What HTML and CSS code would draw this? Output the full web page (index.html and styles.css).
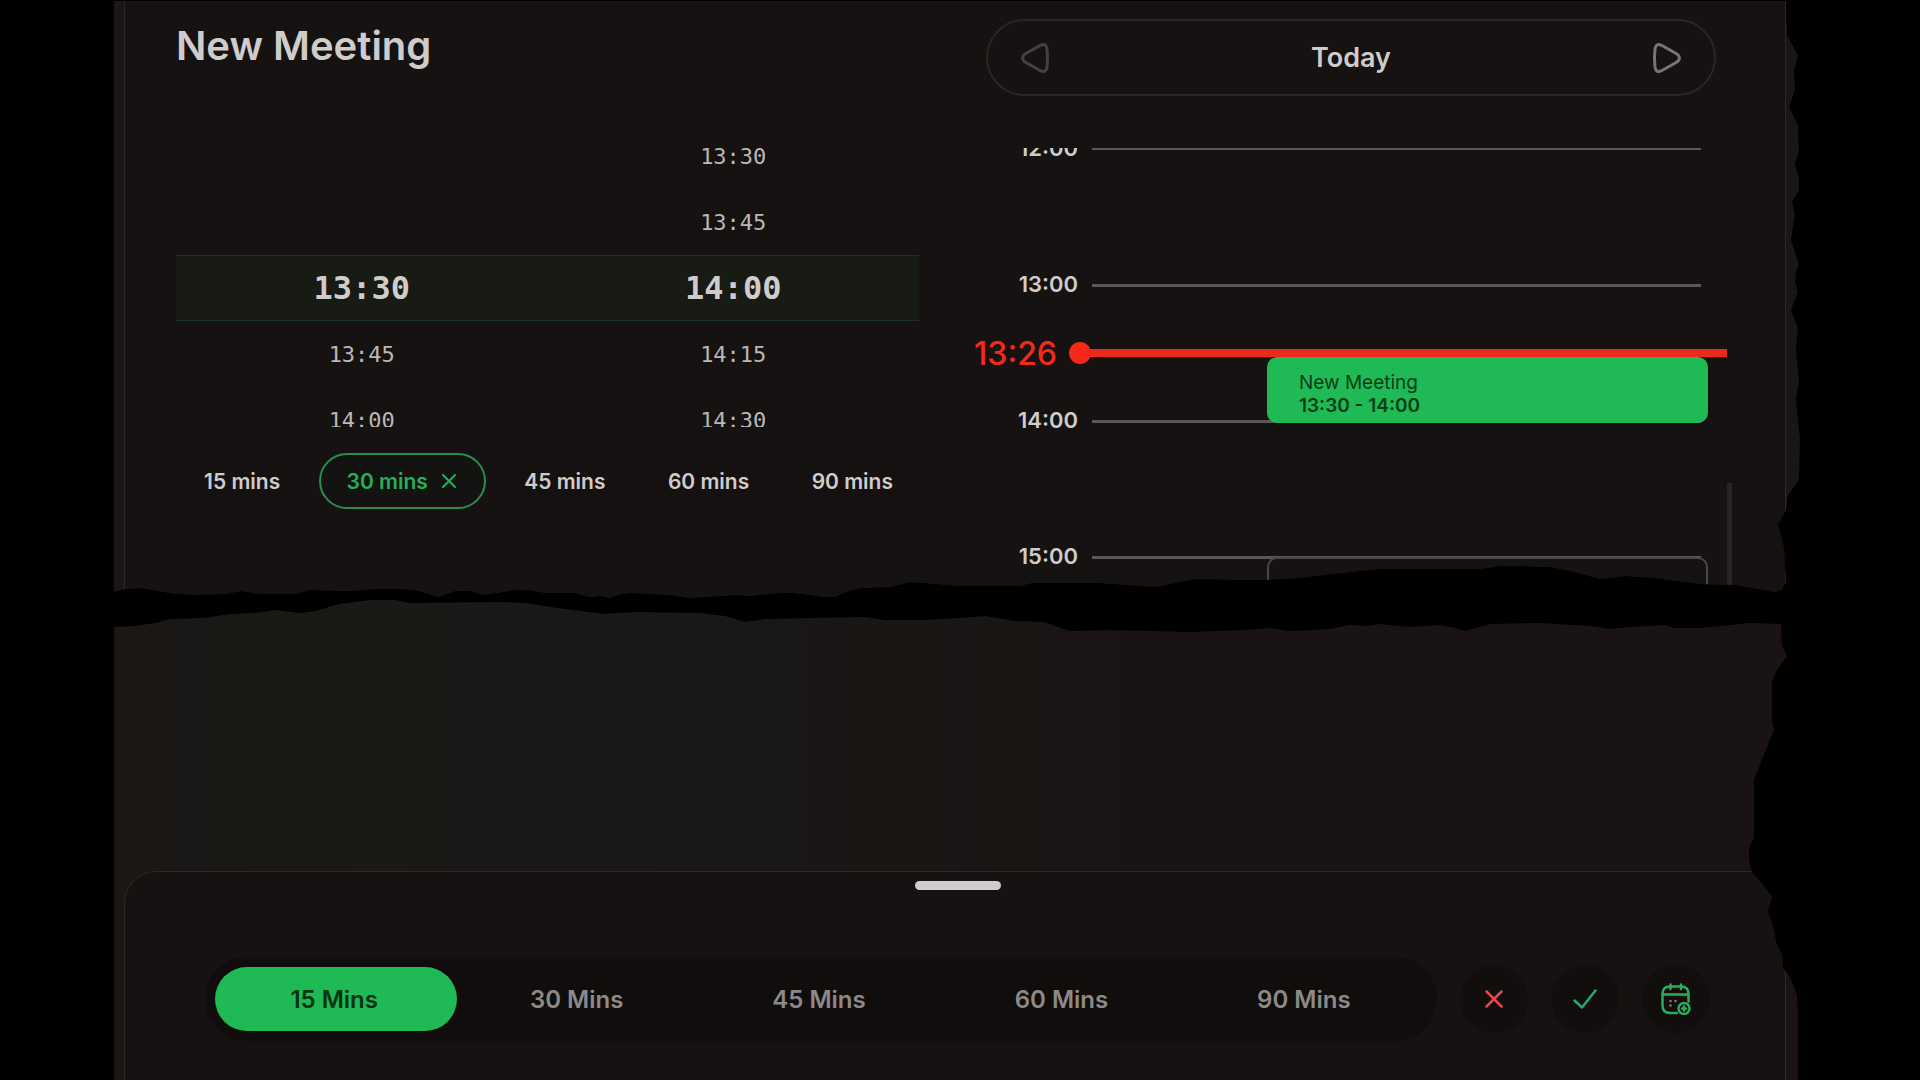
FILE: index.html
```
<!DOCTYPE html>
<html lang="en">
<head>
    <meta charset="UTF-8">
    <meta name="viewport" content="width=device-width, initial-scale=1.0">
    <title>New Meeting</title>
    <link rel="stylesheet" href="styles.css">
</head>
<body>
    <!-- Torn paper outlines used by the two sheets -->
    <svg class="defs" width="0" height="0" aria-hidden="true">
        <clipPath id="tear-top" clipPathUnits="objectBoundingBox">
            <path transform="scale(0.0005931 0.0016667) translate(-114 0)" d="M114 1 L1786 1 L1787 35 L1798 55 L1794 70 L1795 90 L1789 107 L1798 125 L1799 150 L1795 165 L1799 178 L1799 190 L1792 202 L1795 215 L1791 240 L1799 264 L1796 272 L1795 282 L1798 292 L1791 310 L1798 328 L1796 350 L1799 380 L1796 400 L1800 440 L1799 480 L1788 495 L1786 510 L1778 524 L1784 548 L1786 582 L1782 590 L1775 592 L1735 585 L1700 584 L1655 578 L1625 576 L1600 579 L1575 572 L1550 567 L1520 566 L1500 566 L1480 569 L1380 569 L1340 573 L1300 578 L1260 580 L1195 579 L1155 587 L1100 583 L1032 583 L1020 586 L960 586 L925 583 L910 582 L890 587 L860 588 L845 592 L835 597 L825 597 L795 593 L780 593 L750 596 L735 595 L690 598 L670 595 L632 593 L620 594 L610 598 L600 596 L590 597 L575 593 L545 593 L530 590 L515 590 L483 595 L470 591 L455 591 L438 597 L420 591 L405 589 L375 589 L350 591 L310 590 L295 594 L260 594 L242 591 L225 594 L190 595 L170 593 L140 588 L125 589 L114 592 Z"/>
        </clipPath>
        <clipPath id="tear-bottom" clipPathUnits="objectBoundingBox">
            <path transform="scale(0.0005931 0.0020833) translate(-114 -600)" d="M114 627 L135 626 L155 623 L170 619 L205 618 L230 614 L255 613 L275 610 L300 613 L315 611 L340 604 L370 600 L395 600 L410 603 L500 602 L525 603 L550 607 L605 614 L635 612 L700 613 L725 616 L745 622 L765 619 L865 617 L885 620 L925 620 L960 618 L985 616 L1015 621 L1045 622 L1058 627 L1070 631 L1110 630 L1190 632 L1245 630 L1260 629 L1270 628 L1290 631 L1330 629 L1350 625 L1365 626 L1380 624 L1410 627 L1440 625 L1455 628 L1465 631 L1490 624 L1540 623 L1570 625 L1590 626 L1610 629 L1630 627 L1665 625 L1675 628 L1700 628 L1750 623 L1781 624 L1782 645 L1787 656 L1777 670 L1772 682 L1772 720 L1774 730 L1765 752 L1754 780 L1754 838 L1749 848 L1749 860 L1752 872 L1757 878 L1772 896 L1768 912 L1773 925 L1776 942 L1782 955 L1783 968 L1790 977 L1797 995 L1798 1010 L1798 1080 L114 1080 Z"/>
        </clipPath>
    </svg>

    <main class="page">
        <section class="sheet sheet-top">
            <div class="planner">
                <div class="picker">
                    <h1>New Meeting</h1>

                    <div class="wheels">
                        <div class="wheel wheel-start">
                            <button type="button" class="time selected">13:30</button>
                            <button type="button" class="time">13:45</button>
                            <button type="button" class="time">14:00</button>
                        </div>
                        <div class="wheel">
                            <button type="button" class="time">13:30</button>
                            <button type="button" class="time">13:45</button>
                            <button type="button" class="time selected">14:00</button>
                            <button type="button" class="time">14:15</button>
                            <button type="button" class="time">14:30</button>
                        </div>
                    </div>

                    <div class="chips">
                        <button type="button" class="chip">15 mins</button>
                        <button type="button" class="chip active">30 mins
                            <svg width="14" height="14" viewBox="0 0 14 14" fill="none" stroke="currentColor" stroke-width="2" stroke-linecap="round"><path d="M1 1l12 12M13 1L1 13"/></svg>
                        </button>
                        <button type="button" class="chip">45 mins</button>
                        <button type="button" class="chip">60 mins</button>
                        <button type="button" class="chip">90 mins</button>
                    </div>
                </div>

                <div class="agenda">
                    <div class="day-nav">
                        <button type="button" class="nav-btn dim" aria-label="Previous day">
                            <svg width="30" height="32" viewBox="0 0 30 32" fill="none" stroke="currentColor" stroke-width="3" stroke-linejoin="round"><path d="M20.500 3.300 L5 12 Q0 16 5 20 L20.500 28.700 Q26 31.500 27 25 Q28 16 27 7 Q26 .5 20.500 3.300 Z"/></svg>
                        </button>
                        <h2>Today</h2>
                        <button type="button" class="nav-btn" aria-label="Next day">
                            <svg width="30" height="32" viewBox="0 0 30 32" fill="none" stroke="currentColor" stroke-width="3" stroke-linejoin="round"><path d="M9.500 3.300 L25 12 Q30 16 25 20 L9.500 28.700 Q4 31.500 3 25 Q2 16 3 7 Q4 .5 9.500 3.300 Z"/></svg>
                        </button>
                    </div>

                    <div class="timeline">
                        <div class="hour"><span>12:00</span></div>
                        <div class="hour"><span>13:00</span></div>
                        <div class="hour"><span>14:00</span></div>
                        <div class="hour"><span>15:00</span></div>

                        <div class="event">
                            <p>New Meeting</p>
                            <p class="event-time">13:30 - 14:00</p>
                        </div>
                        <div class="event busy"></div>
                        <div class="now"><span>13:26</span></div>
                        <div class="scroll-thumb"></div>
                    </div>
                </div>
            </div>
        </section>

        <section class="sheet sheet-bottom">
            <div class="drawer">
                <div class="handle"></div>
                <div class="drawer-row">
                    <div class="segments">
                        <button type="button" class="segment active">15 Mins</button>
                        <button type="button" class="segment">30 Mins</button>
                        <button type="button" class="segment">45 Mins</button>
                        <button type="button" class="segment">60 Mins</button>
                        <button type="button" class="segment">90 Mins</button>
                    </div>
                    <button type="button" class="round-btn cancel" aria-label="Cancel">
                        <svg width="18" height="18" viewBox="0 0 18 18" fill="none" stroke="currentColor" stroke-width="2.500" stroke-linecap="round"><path d="M1.500 1.500l15 15M16.500 1.500l-15 15"/></svg>
                    </button>
                    <button type="button" class="round-btn confirm" aria-label="Confirm">
                        <svg width="24" height="20" viewBox="0 0 24 20" fill="none" stroke="currentColor" stroke-width="2.500" stroke-linecap="round" stroke-linejoin="round"><path d="M1.500 11.500l7.500 7L22.500 1.500"/></svg>
                    </button>
                    <button type="button" class="round-btn schedule" aria-label="Add to calendar">
                        <svg width="30" height="32" viewBox="0 0 30 32" fill="none" stroke="currentColor" stroke-width="2.500" stroke-linecap="round">
                            <path d="M16 30H9Q1.500 30 1.500 22.500V11Q1.500 3.500 9 3.500H20Q27.500 3.500 27.500 11V18.500"/>
                            <path d="M9.500 1.500v4.500M20 1.500v4.500M2 11.500h25"/>
                            <circle cx="23" cy="25.500" r="5.500"/>
                            <path d="M23 23.500v4M21 25.500h4"/>
                            <path class="dots" d="M9.500 18h.01M14.500 18h.01M9.500 22.500h.01"/>
                        </svg>
                    </button>
                </div>
            </div>
        </section>
    </main>
</body>
</html>
```
FILE: styles.css
```
* {
    box-sizing: border-box;
}

body {
    margin: 0;
    background-color: #000;
    color: #cfcccb;
    font-family: Inter, "Open Sans", sans-serif;
}

h1, h2, p {
    margin: 0;
}

button {
    padding: 0;
    border: none;
    background: none;
    color: inherit;
    font-family: inherit;
    cursor: pointer;
}

.defs {
    position: absolute;
}

.page {
    display: flex;
    flex-direction: column;
    min-height: 100vh;
    padding: 0 120px 0 114px;
}

/* Sheets */
.sheet {
    padding: 0 14px 0 10px;
}

.sheet-top {
    background-color: #191615;
    clip-path: url(#tear-top);
}

.sheet-bottom {
    flex: 1;
    display: flex;
    flex-direction: column;
    padding-top: 271px;
    background: linear-gradient(90deg, #1a1715 0%, #191916 15%, #191816 35%, #191413 60%);
    clip-path: url(#tear-bottom);
}

/* Planner */
.planner {
    display: grid;
    grid-template-columns: 743fr 762fr;
    gap: 51px;
    padding: 0 53px 0 51px;
    border: 1px solid #2b2725;
    border-width: 0 1px;
    background-color: #161211;
}

.picker h1 {
    padding-top: 22px;
    font-size: 40px;
    font-weight: 600;
    line-height: 48px;
}

.wheels {
    display: grid;
    grid-template-columns: 1fr 1fr;
    height: 304px;
    margin-top: 53px;
    overflow: hidden;
}

.wheel {
    display: flex;
    flex-direction: column;
}

.wheel-start {
    padding-top: 132px;
}

.time {
    flex: none;
    height: 66px;
    font-family: "DejaVu Sans Mono", monospace;
    font-size: 22px;
    color: #bab7b6;
}

.time.selected {
    border: 1px solid #1d2f26;
    border-width: 1px 0;
    background-color: #181a14;
    font-size: 32px;
    font-weight: bold;
    color: #cfcccb;
}

.chips {
    display: flex;
    justify-content: space-between;
    margin-top: 26px;
    padding: 0 2px 0 4px;
}

.chip {
    display: flex;
    align-items: center;
    gap: 14px;
    height: 56px;
    padding: 0 24px;
    border-radius: 28px;
    background-color: #151110;
    font-size: 21px;
    font-weight: 600;
}

.chip.active {
    padding: 0 28px 0 26px;
    border: 2px solid #2a8d4d;
    background-color: #131412;
    color: #27ae58;
}

/* Agenda */
.agenda {
    padding-top: 19px;
}

.day-nav {
    display: flex;
    align-items: center;
    justify-content: space-between;
    height: 77px;
    margin: 0 16px;
    padding: 0 32px;
    border: 2px solid #292625;
    border-radius: 39px;
}

.day-nav h2 {
    font-size: 27px;
    font-weight: 600;
}

.nav-btn {
    display: flex;
    color: #777473;
}

.nav-btn.dim {
    color: #454140;
}

.timeline {
    position: relative;
    height: 452px;
    margin-top: 52px;
    overflow: hidden;
}

.hour {
    display: flex;
    gap: 14px;
    height: 136px;
    padding-right: 31px;
}

.hour span {
    width: 108px;
    margin-top: -13px;
    font-size: 22px;
    font-weight: 600;
    line-height: 26px;
    text-align: right;
}

.hour::after {
    content: "";
    flex: 1;
    height: 3px;
    background-color: #5a5756;
}

.hour:first-child::after {
    height: 2px;
}

.event {
    position: absolute;
    top: 209px;
    left: 297px;
    right: 24px;
    height: 66px;
    padding: 14px 32px;
    border-radius: 10px;
    background-color: #1fb955;
    color: #063d15;
    font-size: 19px;
    line-height: 23px;
}

.event-time {
    font-weight: 600;
}

.event.busy {
    top: 409px;
    border: 2px solid #4a4746;
    background: none;
}

.now {
    position: absolute;
    top: 185px;
    left: 0;
    right: 5px;
    display: flex;
    align-items: center;
    height: 40px;
    color: #f5291a;
}

.now span {
    width: 87px;
    font-size: 32px;
    font-weight: 500;
    text-align: right;
}

.now::before {
    content: "";
    order: 1;
    width: 22px;
    height: 22px;
    margin-left: 12px;
    border-radius: 50%;
    background-color: #f5291a;
}

.now::after {
    content: "";
    order: 2;
    flex: 1;
    height: 8px;
    margin-left: -4px;
    background-color: #ea2a1d;
}

.scroll-thumb {
    position: absolute;
    top: 335px;
    right: 0;
    bottom: 0;
    width: 5px;
    background-color: #282524;
}

/* Drawer */
.drawer {
    flex: 1;
    padding: 9px 75px 0 80px;
    border: 1px solid #2e2927;
    border-bottom: none;
    border-radius: 32px 32px 0 0;
    background-color: #161211;
}

.handle {
    width: 86px;
    height: 9px;
    margin: 0 auto;
    border-radius: 5px;
    background-color: #cfcccb;
}

.drawer-row {
    display: flex;
    align-items: center;
    gap: 23px;
    margin-top: 67px;
}

.segments {
    flex: 1;
    display: flex;
    padding: 10px;
    border-radius: 42px;
    background-color: #110d0c;
}

.segment {
    flex: 1;
    height: 64px;
    padding-right: 4px;
    border-radius: 32px;
    font-size: 24px;
    font-weight: 600;
    color: #8d8988;
}

.segment.active {
    background-color: #1fb955;
    color: #063312;
}

.round-btn {
    display: flex;
    align-items: center;
    justify-content: center;
    width: 68px;
    height: 68px;
    border-radius: 50%;
    background-color: #120e0d;
}

.cancel {
    color: #e04a48;
}

.confirm {
    color: #25a872;
}

.schedule {
    color: #2bac5a;
}

.dots {
    stroke: #79857c;
}
```
